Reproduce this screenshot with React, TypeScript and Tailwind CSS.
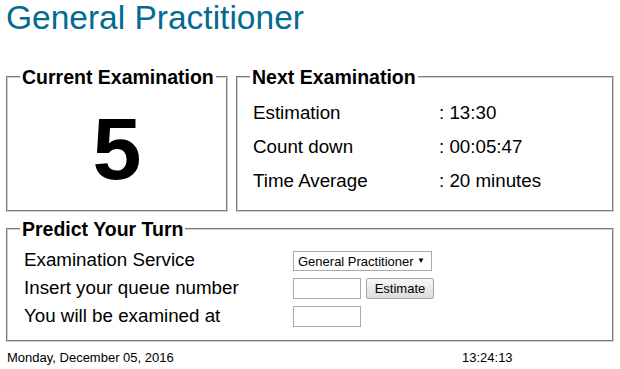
import React from "react";

const fs =
  "border-2 [border-style:groove] border-[#d0d0d0] pl-[12px] m-0 min-w-0";
const lg = "px-[2px] text-[19.5px] font-bold leading-[22px] whitespace-nowrap";

export default function App() {
  return (
    <div className="w-[620px] h-[369px] bg-white px-[6px] font-['Liberation_Sans',Arial,sans-serif] text-black overflow-hidden">
      <h1 className="text-[33.5px] leading-[38px] text-[#036b92] mt-[-1px] font-normal">
        General Practitioner
      </h1>

      <div className="flex gap-2 mt-[29px] items-stretch">
        <fieldset className={`${fs} pr-[2px] w-[222px] shrink-0`}>
          <legend className={lg}>Current Examination</legend>
          <div className="h-[122px] flex items-center justify-center pr-[10px]">
            <span className="text-[88px] font-bold leading-[88px]">5</span>
          </div>
        </fieldset>

        <fieldset className={`${fs} pr-[12px] flex-1`}>
          <legend className={lg}>Next Examination</legend>
          <div className="pt-[8px] pb-[12px] pl-[3px] text-[18.75px] leading-[34px] grid grid-cols-[186px_1fr]">
            <div>Estimation</div>
            <div>: 13:30</div>
            <div>Count down</div>
            <div>: 00:05:47</div>
            <div>Time Average</div>
            <div>: 20 minutes</div>
          </div>
        </fieldset>
      </div>

      <fieldset className={`${fs} pr-[12px] mt-[6px]`}>
        <legend className={lg}>Predict Your Turn</legend>
        <div className="pt-[6px] pb-[10px] pl-[4px] text-[18.75px] grid grid-cols-[269px_1fr]">
          <div className="h-[28px] flex items-center">Examination Service</div>
          <div className="h-[28px] flex items-center">
            <div className="w-[139px] h-[20px] border border-[#a9a9a9] bg-white flex items-center justify-between pl-[4px] pr-[6px] text-[13px] leading-none mt-[2px]">
              <span>General Practitioner</span>
              <span className="text-[8px]">▼</span>
            </div>
          </div>
          <div className="h-[28px] flex items-center">Insert your queue number</div>
          <div className="h-[28px] flex items-center gap-[5px]">
            <div className="w-[68px] h-[21px] border border-[#a9a9a9] bg-white" />
            <div className="w-[68px] h-[21px] border border-[#a6a6a6] rounded-[2px] bg-gradient-to-b from-[#f7f7f7] to-[#dcdcdc] flex items-center justify-center text-[13px] leading-none">
              Estimate
            </div>
          </div>
          <div className="h-[28px] flex items-center">You will be examined at</div>
          <div className="h-[28px] flex items-center">
            <div className="w-[68px] h-[21px] border border-[#a9a9a9] bg-white" />
          </div>
        </div>
      </fieldset>

      <div className="mt-[8px] grid grid-cols-[455px_1fr] text-[13px] leading-[15px] pl-[1px]">
        <div>Monday, December 05, 2016</div>
        <div>13:24:13</div>
      </div>
    </div>
  );
}
